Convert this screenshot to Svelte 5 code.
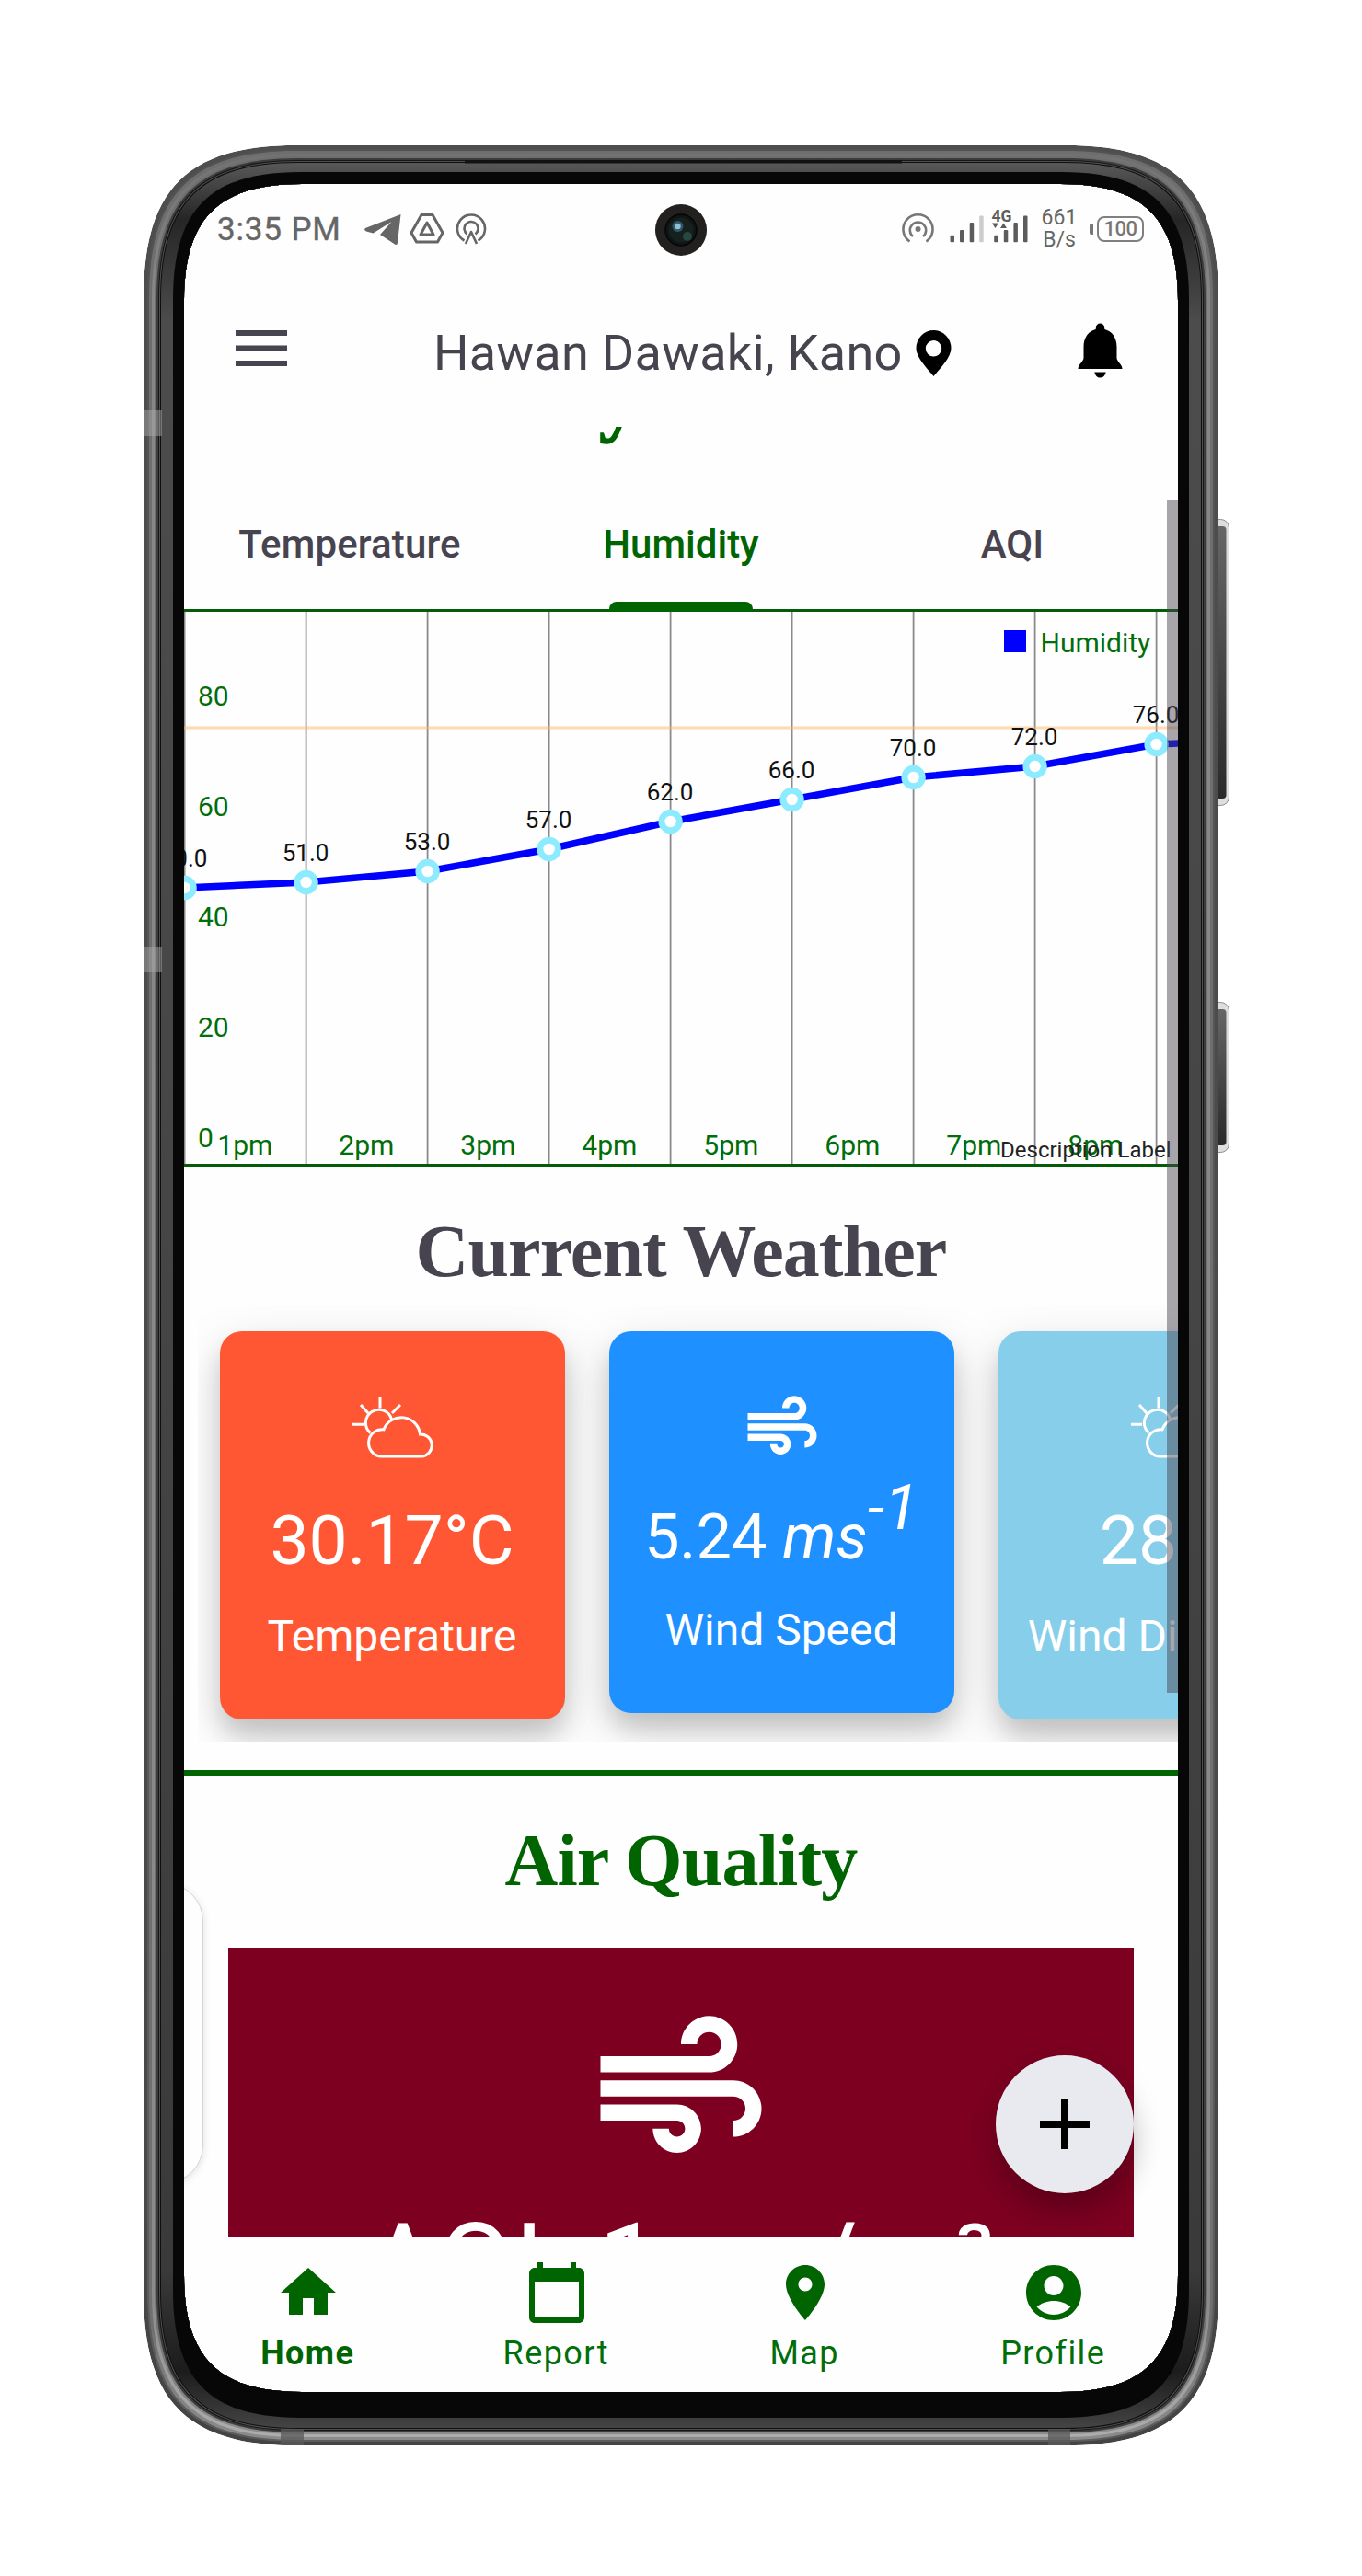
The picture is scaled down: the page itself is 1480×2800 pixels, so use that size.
<script>
  const points = [50, 51, 53, 57, 62, 66, 70, 72, 76, 77].map((v, i) => ({
    v,
    x: 200.6 + i * 132,
    y: 1265 - v * 6
  }));
  const line = points.map((p) => `${p.x},${p.y}`).join(' ');
  const hours = ['1pm', '2pm', '3pm', '4pm', '5pm', '6pm', '7pm', '8pm'];
  const scale = [80, 60, 40, 20, 0];
  const tabs = ['Temperature', 'Humidity', 'AQI'];
  const active = 'Humidity';

  const wind =
    'M14.5 17c0 1.65-1.35 3-3 3s-3-1.35-3-3h2c0 .55.45 1 1 1s1-.45 1-1-.45-1-1-1H2v-2h9.5c1.65 0 3 1.35 3 3zM19 6.5C19 4.57 17.43 3 15.5 3S12 4.57 12 6.5h2c0-.83.67-1.5 1.5-1.5s1.5.67 1.5 1.5S16.33 8 15.5 8H2v2h13.5c1.93 0 3.5-1.57 3.5-3.5zm-.5 4.5H2v2h16.5c.83 0 1.5.67 1.5 1.5s-.67 1.5-1.5 1.5v2c1.93 0 3.5-1.57 3.5-3.5S20.43 11 18.5 11z';

  const cards = [
    { kind: 'temp', icon: 'cloud', value: '30.17°C', label: 'Temperature' },
    { kind: 'speed', icon: 'wind', value: '5.24', label: 'Wind Speed' },
    { kind: 'direction', icon: 'cloud', value: '280°', label: 'Wind Direction' }
  ];

  const nav = [
    { label: 'Home', d: 'M10 20v-6h4v6h5v-8h3L12 3 2 12h3v8z' },
    {
      label: 'Report',
      d: 'M20 3h-1V1h-2v2H7V1H5v2H4c-1.1 0-2 .9-2 2v16c0 1.1.9 2 2 2h16c1.1 0 2-.9 2-2V5c0-1.1-.9-2-2-2zm0 18H4V8h16v13z'
    },
    {
      label: 'Map',
      d: 'M12 2C8.13 2 5 5.13 5 9c0 5.25 7 13 7 13s7-7.75 7-13c0-3.87-3.13-7-7-7zm0 9.5c-1.38 0-2.5-1.12-2.5-2.5s1.12-2.5 2.5-2.5 2.5 1.12 2.5 2.5-1.12 2.5-2.5 2.5z'
    },
    {
      label: 'Profile',
      d: 'M12 2C6.48 2 2 6.48 2 12s4.48 10 10 10 10-4.48 10-10S17.52 2 12 2zm0 4c1.93 0 3.5 1.57 3.5 3.5S13.93 13 12 13s-3.5-1.57-3.5-3.5S10.07 6 12 6zm0 14c-2.03 0-4.43-.82-6.14-2.88C7.55 15.8 9.68 15 12 15s4.45.8 6.14 2.12C16.43 19.18 14.03 20 12 20z'
    }
  ];

  // Rounded outline with smooth, superelliptic corners.
  function outline(l, t, r, b, inset) {
    const L = 165 - 0.84 * inset;
    const a = 48 - 0.25 * inset;
    return (
      `M${l} ${t + L}C${l} ${t + a} ${l + a} ${t} ${l + L} ${t}H${r - L}` +
      `C${r - a} ${t} ${r} ${t + a} ${r} ${t + L}V${b - L}` +
      `C${r} ${b - a} ${r - a} ${b} ${r - L} ${b}H${l + L}` +
      `C${l + a} ${b} ${l} ${b - a} ${l} ${b - L}Z`
    );
  }
  const ring = (i) => outline(156 + i, 158 + i, 1324 - i, 2658 - i, i);
  const outer = ring(0);
  const glass = outline(200, 200, 1280, 2600, 44);
  const bezel = outline(188, 187, 1292, 2628, 31);
  const rings = [
    [0, 'url(#edge)'],
    [4, 'url(#edge2)'],
    [6, 'url(#mid)'],
    [9, 'url(#shine)'],
    [12, 'url(#mid)'],
    [14, '#3c3c3c'],
    [16, '#161616'],
    [17, '#505050'],
    [18, '#0e0e0e'],
    [19, 'url(#band)']
  ];
</script>

<div class="page">
  <div class="phone">
    <div class="screen">
      <div class="status">
        <span class="time">3:35 PM</span>
        <svg class="notes" width="134" height="40" viewBox="395 229 134 40">
          <path fill="#666" d="M435.5 233L397 248Q395 250 398 251.500L405.500 253.500L425.500 241L413 255L429 265.500Q431.500 267 432 264Z" />
          <g fill="none" stroke="#666" stroke-width="3" stroke-linejoin="round">
            <path d="M458 233.500H470L481 253L475.500 263H452.500L447 253Z" />
            <path d="M464 242L471 255H457Z" />
            <path d="M504.500 261.500A15 15 0 1 1 519.500 261.500" stroke-width="2.600" />
            <path d="M507.500 254.500A7.500 7.500 0 1 1 516.500 254.500" stroke-width="2.600" />
            <path d="M506 265L512 252L518 265" stroke-width="2.600" />
          </g>
        </svg>
        <span class="gap"></span>
        <svg class="signals" width="140" height="44" viewBox="979 225 140 44">
          <g fill="none" stroke="#777" stroke-width="2.600">
            <path d="M988.500 262.500A16 16 0 1 1 1006.500 262.500" />
            <path d="M992 257A8.700 8.700 0 1 1 1003 257" />
          </g>
          <circle cx="997.500" cy="249" r="3" fill="#777" />
          <g fill="#5c5c5c">
            <rect x="1032.500" y="255.700" width="4.500" height="7.500" rx="1" />
            <rect x="1043" y="250" width="4.500" height="13.200" rx="1" />
            <rect x="1053.700" y="242" width="4.500" height="21.200" rx="1" />
            <rect x="1064.200" y="234.500" width="4.500" height="28.700" rx="1" fill="#cdcdcd" />
            <rect x="1080.200" y="255.700" width="4.500" height="7.500" rx="1" />
            <rect x="1090.800" y="250" width="4.500" height="13.200" rx="1" />
            <rect x="1101.400" y="242" width="4.500" height="21.200" rx="1" />
            <rect x="1112" y="234.500" width="4.500" height="28.700" rx="1" />
            <path d="M1078 242.500h7l-3.500 5.500zM1087 248h7l-3.500 -5.500z" />
          </g>
          <text class="net" x="1077.500" y="240.500" textLength="22" lengthAdjust="spacingAndGlyphs">4G</text>
        </svg>
        <span class="rate"><span>661</span><span>B/s</span></span>
        <span class="tip"></span>
        <span class="battery">100</span>
        <svg class="camera" width="56" height="56" viewBox="0 0 56 56">
          <circle cx="28" cy="28" r="28" fill="#23211f" />
          <circle cx="28" cy="28" r="17" fill="#101414" stroke="#050606" stroke-width="1.500" />
          <circle cx="28" cy="28" r="13.500" fill="#16201f" />
          <circle cx="35" cy="35" r="5" fill="#2c5a50" opacity=".7" />
          <circle cx="24.500" cy="24" r="6" fill="#2f5867" />
          <circle cx="24.500" cy="24" r="3.200" fill="#8cc0d2" />
        </svg>
      </div>

      <div class="header">
        <svg class="menu" width="58" height="40" viewBox="0 0 58 40">
          <path fill="#47434f" d="M1 0h56v6H1zM1 16.500h56v6H1zM1 33h56v6H1z" />
        </svg>
        <span class="place">Hawan Dawaki, Kano</span>
        <svg class="pin" width="39" height="50" viewBox="0 0 39 50">
          <path d="M19.500 50C14 43 .5 30 .5 19.500a19 19.500 0 0 1 38 0C38.500 30 25 43 19.500 50ZM19.500 28.500a8.700 8.700 0 1 0 0-17.400a8.700 8.700 0 0 0 0 17.400Z" />
        </svg>
        <svg class="bell" width="49" height="60" viewBox="0 0 49 60">
          <path d="M19.700 7V5.500a4.800 5 0 0 1 9.600 0V7C37 9 42.500 15.500 42.500 26V38C42.500 42 48.500 45 48.500 50H.5C.5 45 6.500 42 6.500 38V26C6.500 15.500 12 9 19.700 7ZM18.300 53.500H30.700Q29.500 59.500 24.500 59.500T18.300 53.500Z" />
        </svg>
      </div>

      <div class="content">
        <div class="peek"><span>y</span></div>
        <div class="tabs">
          {#each tabs as tab}
            <div class="tab" class:active={tab === active}>{tab}</div>
          {/each}
        </div>

        <svg class="chart" width="1080" height="606" viewBox="200 662 1080 606">
          {#each points.slice(0, 9) as p}
            <path d="M{p.x} 664V1266" stroke="#8a8a8a" stroke-width="1.800" />
          {/each}
          <path d="M200 663.500H1280M200 1266.500H1280" stroke="#055c08" stroke-width="3" />
          <path d="M200 791H1280" stroke="#ffb566" stroke-opacity=".5" stroke-width="3" />
          {#each scale as s, i}
            <text class="axis" x="215" y={767 + i * 119.9}>{s}</text>
          {/each}
          {#each hours as h, i}
            <text class="axis mid" x={266.3 + i * 132} y="1254.500">{h}</text>
          {/each}
          <polyline points={line} fill="none" stroke="#0000ff" stroke-width="7.500" />
          {#each points as p}
            <circle cx={p.x} cy={p.y} r="9.700" fill="#fff" stroke="#8cebff" stroke-width="7" />
            <text class="value mid" x={p.x - 0.5} y={p.y - 22.7}>{p.v.toFixed(1)}</text>
          {/each}
          <rect x="1091" y="685" width="24" height="24" fill="#0000ff" />
          <text class="axis" x="1130.500" y="708.500">Humidity</text>
          <text class="desc" x="1272.500" y="1257.500">Description Label</text>
        </svg>

        <h2 class="current">Current Weather</h2>

        <div class="cards">
          {#each cards as card}
            <div class="card {card.kind}">
              {#if card.icon === 'wind'}
                <svg width="90" height="90" viewBox="0 0 24 24"><path fill="#fff" d={wind} /></svg>
              {:else}
                <svg width="90" height="90" viewBox="-1 -12 90 90">
                  <g fill="none" stroke="#fff" stroke-width="3">
                    <path d="M30 0V12.500M0 30.300H12M9 9L17 18M52 9L43 18" />
                    <path d="M19.500 39.500A14.300 14.300 0 1 1 42.500 24.800" />
                    <path d="M34 35.800A20.500 20.500 0 0 1 73.500 41A12 12 0 0 1 75 65H30.500A14.500 14.500 0 0 1 34 35.800Z" />
                  </g>
                </svg>
              {/if}
              <div class="reading">
                {card.value}{#if card.kind === 'speed'}<i>&nbsp;ms<sup>-1</sup></i>{/if}
              </div>
              <div class="caption">{card.label}</div>
            </div>
          {/each}
        </div>

        <div class="rule"></div>
        <h2 class="air">Air Quality</h2>
        <div class="aqi">
          <svg width="210" height="210" viewBox="0 0 24 24"><path fill="#fff" d={wind} /></svg>
          <div>AQI: 1 μg/m³</div>
        </div>
        <div class="thumb"></div>
      </div>

      <nav>
        {#each nav as item, i}
          <div class="item" class:on={i === 0}>
            <svg width="72" height="72" viewBox="0 0 24 24"><path fill="#006400" d={item.d} /></svg>
            <span>{item.label}</span>
          </div>
        {/each}
      </nav>

      <div class="handle"></div>
      <div class="fab">
        <svg width="54" height="54" viewBox="0 0 54 54"><path d="M23 0h8v23h23v8H31v23h-8V31H0v-8h23z" /></svg>
      </div>
    </div>

    <svg class="frame" width="1184" height="2500" viewBox="156 158 1184 2500">
      <defs>
        <clipPath id="body"><path d={outer + glass} clip-rule="evenodd" /></clipPath>
        <linearGradient id="edge" x2="0" y2="1">
          <stop offset="0" stop-color="#4e4e4e" /><stop offset=".9" stop-color="#484848" /><stop offset="1" stop-color="#444" />
        </linearGradient>
        <linearGradient id="edge2" x2="0" y2="1">
          <stop offset="0" stop-color="#525252" /><stop offset="1" stop-color="#5c5c5c" />
        </linearGradient>
        <linearGradient id="mid" x2="0" y2="1">
          <stop offset="0" stop-color="#6e6e6e" /><stop offset=".95" stop-color="#707070" /><stop offset="1" stop-color="#8c8c8c" />
        </linearGradient>
        <linearGradient id="shine" x2="0" y2="1">
          <stop offset="0" stop-color="#727272" /><stop offset=".06" stop-color="#868686" /><stop offset=".94" stop-color="#8a8a8a" /><stop offset="1" stop-color="#adadad" />
        </linearGradient>
        <linearGradient id="band" x2="0" y2="1">
          <stop offset="0" stop-color="#585858" /><stop offset=".025" stop-color="#262626" /><stop offset=".07" stop-color="#4c4c4c" />
          <stop offset=".5" stop-color="#454545" /><stop offset=".93" stop-color="#3a3a3a" /><stop offset=".975" stop-color="#1c1c1c" /><stop offset="1" stop-color="#444" />
        </linearGradient>
        <linearGradient id="key" x2="0" y2="1">
          <stop offset="0" stop-color="#666" /><stop offset="1" stop-color="#2a2a2a" />
        </linearGradient>
      </defs>
      {#each [[564, 312], [1089, 164]] as [y, h]}
        <rect x="1310" y={y + 0.5} width="25.500" height={h - 1} rx="9" fill="#dedede" stroke="#8e8e8e" />
        <rect x="1310" y={y + 8} width="22.500" height={h - 16} rx="4" fill="url(#key)" />
      {/each}
      <g clip-path="url(#body)">
        {#each rings as [inset, fill]}
          <path d={ring(inset)} {fill} />
        {/each}
        <rect x="505" y="174" width="475" height="3.500" fill="#121212" />
        <path d={bezel} fill="#070707" />
        <path d="M156 446h20v28h-20zM156 1029h20v28h-20z" fill="#b0b0b0" fill-opacity=".45" />
        <path d="M305 2640h25v18h-25zM1139 2640h24v18h-24z" fill="#5a5a5a" fill-opacity=".75" />
      </g>
    </svg>
  </div>
</div>

<style>
  :global(body) {
    margin: 0;
    background: #fff;
  }
  .page {
    box-sizing: border-box;
    width: 1480px;
    height: 2800px;
    padding: 158px 156px 0;
    background: #fff;
    font-family: Roboto, 'Liberation Sans', sans-serif;
  }
  .phone {
    position: relative;
    box-sizing: border-box;
    width: 1168px;
    height: 2500px;
    padding: 42px 44px 58px;
  }
  .frame {
    position: absolute;
    left: 0;
    top: 0;
    pointer-events: none;
  }
  .screen {
    position: relative;
    display: flex;
    flex-direction: column;
    width: 1080px;
    height: 2400px;
    overflow: hidden;
    background: #fefefe;
  }
  svg {
    display: block;
    flex: none;
  }

  .status {
    position: relative;
    display: flex;
    align-items: center;
    box-sizing: border-box;
    height: 98px;
    padding: 0 37px 0 36px;
    color: #666;
  }
  .time {
    width: 159px;
    font-size: 35px;
    letter-spacing: 0.85px;
    white-space: nowrap;
    -webkit-text-stroke: 0.4px #666;
  }
  .gap {
    flex: 1;
  }
  .signals {
    margin-right: 12px;
    margin-top: -4px;
  }
  .net {
    font: 700 19px Roboto, sans-serif;
    fill: #5c5c5c;
  }
  .rate {
    display: flex;
    flex-direction: column;
    align-items: center;
    width: 40px;
    margin-right: 13px;
    font-size: 23px;
    line-height: 24px;
  }
  .tip {
    width: 4px;
    height: 12px;
    margin-right: 4px;
    border-radius: 2px 0 0 2px;
    background: #777;
  }
  .battery {
    box-sizing: border-box;
    width: 51px;
    height: 28px;
    border: 2.5px solid #808080;
    border-radius: 8px;
    font-size: 22px;
    font-weight: 500;
    line-height: 23px;
    letter-spacing: -0.5px;
    text-align: center;
    color: #777;
  }
  .camera {
    position: absolute;
    left: 512px;
    top: 22px;
  }

  .header {
    display: flex;
    align-items: center;
    box-sizing: border-box;
    height: 164px;
    padding: 7px 60px 0 55px;
    color: #47434f;
  }
  .menu {
    margin-top: -10px;
  }
  .place {
    width: 509px;
    margin-left: 158px;
    font-size: 54px;
    letter-spacing: 0.3px;
    white-space: nowrap;
  }
  .pin {
    margin-left: 15px;
  }
  .bell {
    margin-left: auto;
    margin-top: -6px;
  }

  .content {
    position: relative;
    height: 1970px;
    overflow: hidden;
  }
  .peek {
    height: 56px;
    margin-top: 2px;
    overflow: hidden;
    padding-left: 451px;
  }
  .peek span {
    display: block;
    margin-top: -73px;
    font: 700 84px/90px 'Liberation Serif', serif;
    color: #006400;
    -webkit-text-stroke: 1.5px #006400;
  }
  .tabs {
    display: grid;
    grid-template-columns: repeat(3, 1fr);
    height: 142px;
  }
  .tab {
    position: relative;
    font-size: 42px;
    font-weight: 500;
    line-height: 143px;
    text-align: center;
    color: #47434f;
  }
  .tab:first-child {
    letter-spacing: 0.15px;
  }
  .tab.active {
    color: #006400;
  }
  .tab.active::after {
    content: '';
    position: absolute;
    left: 102px;
    bottom: -2px;
    width: 156px;
    height: 11px;
    border-radius: 8px 8px 0 0;
    background: #006400;
  }
  .axis {
    font-size: 30px;
    fill: #006e0b;
  }
  .value {
    font-size: 26px;
    fill: #111;
  }
  .mid {
    text-anchor: middle;
  }
  .desc {
    font-size: 24px;
    text-anchor: end;
    fill: #222;
  }

  h2 {
    margin: 0;
    font: 700 80px 'Liberation Serif', serif;
    text-align: center;
  }
  .current {
    box-sizing: border-box;
    height: 152px;
    padding-top: 31px;
    line-height: 122px;
    letter-spacing: -0.9px;
    color: #47434f;
  }
  .air {
    height: 187.5px;
    line-height: 184px;
    letter-spacing: -0.8px;
    color: #006400;
  }
  .cards {
    display: flex;
    align-items: flex-start;
    gap: 48px;
    box-sizing: border-box;
    height: 473.5px;
    margin-left: 15px;
    padding: 26.5px 0 0 24px;
    overflow: hidden;
  }
  .card {
    display: flex;
    flex: none;
    flex-direction: column;
    align-items: center;
    box-sizing: border-box;
    width: 375px;
    padding: 59.5px 0 62px;
    border-radius: 24px;
    box-shadow: 0 18px 26px rgba(0, 0, 0, 0.17), 0 16px 60px rgba(0, 0, 0, 0.12);
    color: #fff;
    white-space: nowrap;
  }
  .temp {
    background: #ff5733;
  }
  .speed {
    background: #1e90ff;
  }
  .direction {
    background: #87ceeb;
  }
  .reading {
    margin: 34px 1px 0 0;
    font-size: 75px;
    line-height: 88px;
  }
  .speed .reading {
    font-size: 68.5px;
    line-height: 81px;
  }
  sup {
    font-size: 68px;
    line-height: 0;
    vertical-align: 32px;
  }
  .caption {
    margin: 33px 1px 0 0;
    font-size: 48px;
    line-height: 56px;
  }
  .rule {
    height: 6px;
    margin-top: 30px;
    background: #006400;
  }
  .aqi {
    display: flex;
    flex-direction: column;
    align-items: center;
    gap: 16px;
    height: 500px;
    margin: 0 48px;
    padding-top: 48px;
    background: #7d0021;
    font-size: 120px;
    line-height: 140px;
    color: #fff;
    white-space: nowrap;
  }
  .thumb {
    position: absolute;
    right: 0;
    top: 81px;
    width: 12px;
    height: 1297px;
    background: rgba(73, 69, 79, 0.48);
  }

  nav {
    display: grid;
    grid-template-columns: repeat(4, 1fr);
    height: 168px;
    background: #fefefe;
  }
  .item {
    display: flex;
    flex-direction: column;
    align-items: center;
    gap: 9px;
    padding-top: 24px;
    font-size: 36px;
    line-height: 42px;
    letter-spacing: 1.4px;
    color: #006e0b;
  }
  .item span {
    margin-right: 1.5px;
  }
  .item.on {
    font-weight: 700;
    color: #006400;
  }

  .handle {
    position: absolute;
    left: -61px;
    top: 1847px;
    width: 80px;
    height: 324px;
    border: 1px solid #d6d6d6;
    border-radius: 48px;
    background: #fefefe;
    box-shadow: 0 2px 8px rgba(0, 0, 0, 0.12);
  }
  .fab {
    position: absolute;
    right: 48px;
    top: 2034px;
    display: flex;
    align-items: center;
    justify-content: center;
    width: 150px;
    height: 150px;
    border-radius: 50%;
    background: #e8eaf0;
    box-shadow: 0 20px 30px rgba(0, 0, 0, 0.2), 0 8px 40px rgba(0, 0, 0, 0.08);
  }
</style>
